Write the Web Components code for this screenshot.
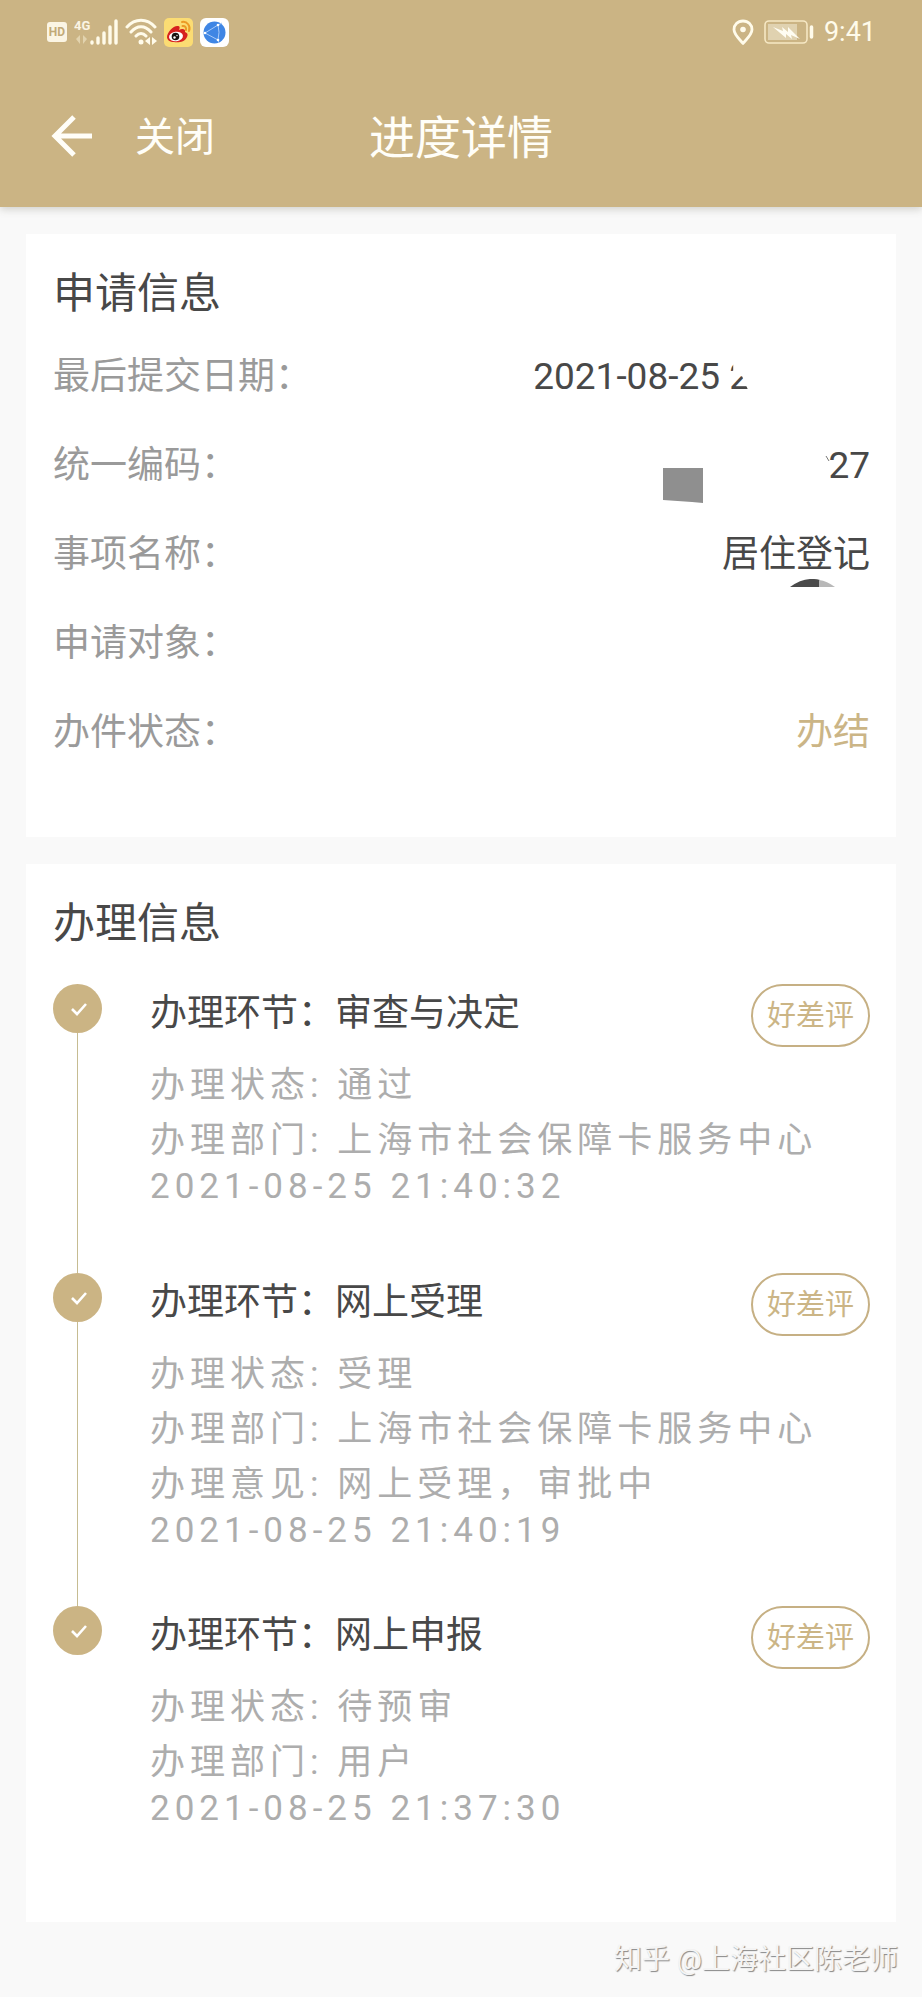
<!DOCTYPE html>
<html lang="zh-CN">
<head>
<meta charset="utf-8">
<meta name="viewport" content="width=device-width, initial-scale=1">
<title>进度详情</title>
<style>
  :root {
    --gold: #cbb484;
    --gold-text: #cbb586;
    --ink: #484848;
    --label: #9a9a9a;
    --muted: #adadad;
    --page: #f9f9f9;
  }
  body {
    margin: 0;
    background: var(--page);
    color: var(--ink);
    font-family: Roboto, "Noto Sans CJK SC", sans-serif;
  }
</style>
</head>
<body>
<progress-page></progress-page>

<script>
const define = (name, html) => {
  const template = document.createElement('template');
  template.innerHTML = html;
  customElements.define(name, class extends HTMLElement {
    constructor() {
      super();
      this.attachShadow({ mode: 'open' }).append(template.content.cloneNode(true));
    }
  });
};

define('status-bar', `
  <style>
    :host { display: flex; align-items: center; justify-content: space-between; height: 64px; padding: 0 46px 0 47px; color: #fffbea; }
    div { display: flex; align-items: center; gap: 7px; }
    .right { gap: 10px; }
    svg { display: block; height: 30px; }
    time { font-size: 27px; line-height: 30px; }
    text { font-family: Roboto, sans-serif; font-weight: 700; }
  </style>
  <div>
    <svg width="20" viewBox="0 0 20 30" role="img" aria-label="HD">
      <rect y="5" width="20" height="20" rx="3" fill="#fbf5e4"/>
      <text x="10" y="19" text-anchor="middle" font-size="12" fill="#c2aa78">HD</text>
    </svg>
    <svg width="44" viewBox="0 0 44 30" role="img" aria-label="4G">
      <text x="0" y="13" font-size="13" fill="#fbf5e4">4G</text>
      <path d="M6 18v9l-4-5zM9 18v9l4-5z" fill="#e2d3ae"/>
      <path d="M18 25v1M24 21v5M30 16v10M36 10v16M42 4v22" stroke="#fffbea" stroke-width="3.4" stroke-linecap="round"/>
    </svg>
    <svg width="32" viewBox="0 0 32 30" fill="none" stroke="#fffbea" stroke-width="3" stroke-linecap="round" aria-hidden="true">
      <path d="M2 10C10 1 22 1 30 10M6 15c6-7 14-7 20 0M11 19c3-3.500 7-3.500 10 0"/>
      <circle cx="16" cy="25" r="2.500" fill="#fffbea" stroke="none"/>
      <path d="M25 20v8l-5-4zM27 20v8l5-4z" fill="#fffbea" stroke="none"/>
    </svg>
    <svg width="29" viewBox="0 0 29 30" aria-hidden="true">
      <rect y="1" width="29" height="29" rx="5" fill="#fbdc73"/>
      <path d="M3 20c0-5 7-12 11-11 2 0 2 2 1 4 3-2 7-1 6 2 3 1 3 3 2 5-2 5-9 6-13 5-4 0-7-2-7-5z" fill="#d6211f"/>
      <ellipse cx="12" cy="19.500" rx="7" ry="4.800" fill="#fff" transform="rotate(-8 12 19.500)"/>
      <circle cx="11.500" cy="19.500" r="3.800" fill="#171310"/>
      <circle cx="10.500" cy="20.500" r="1.200" fill="#fff"/>
      <circle cx="13" cy="18.500" r="0.700" fill="#fff"/>
      <path d="M18 5c5-1 9 4 7 9M18.500 9c2.500-.5 4 1.500 3.500 4" fill="none" stroke="#eb9a25" stroke-width="2" stroke-linecap="round"/>
    </svg>
    <svg width="29" viewBox="0 0 29 30" aria-hidden="true">
      <rect y="1" width="29" height="29" rx="6" fill="#fff"/>
      <circle cx="14.500" cy="15.500" r="11" fill="#3f86e4"/>
      <path d="M5 16 18 8Q20 15 18 23L5 16M18 8l4-2M18 23l1 3" fill="none" stroke="#a9cbf8" stroke-width="1"/>
      <circle cx="18" cy="8" r="1.300" fill="#fff"/>
      <circle cx="18" cy="23" r="1.300" fill="#fff"/>
      <circle cx="5" cy="16" r="1.300" fill="#fff"/>
    </svg>
  </div>
  <div class="right">
    <svg width="22" viewBox="0 0 22 30" aria-hidden="true">
      <path d="M11 4c5.500 0 9 4 9 8.500 0 5-5 9-9 14-4-5-9-9-9-14C2 8 5.500 4 11 4z" fill="none" stroke="#fffbea" stroke-width="2.800" stroke-linejoin="round"/>
      <circle cx="11" cy="12.500" r="2.800" fill="#fffbea"/>
    </svg>
    <svg width="50" viewBox="0 0 50 30" aria-hidden="true">
      <rect x="1" y="4" width="42" height="22" rx="4" fill="none" stroke="#f6e8c4" stroke-width="1.600"/>
      <rect x="4" y="7" width="29" height="16" fill="#e0d2b0"/>
      <path d="m9 10 10 4-1-4 6 5 0-5 12 12-9-4 1 4-6-5 0 4z" fill="#fffdf2"/>
      <path d="M47.500 10v10" stroke="#fffbea" stroke-width="3.500" stroke-linecap="round"/>
    </svg>
    <time>9:41</time>
  </div>
`);

define('nav-bar', `
  <style>
    :host { display: grid; grid-template-columns: 1fr auto 1fr; align-items: center; height: 143px; color: #fffef8; }
    .left { display: flex; align-items: center; gap: 42px; padding-left: 51px; }
    button { border: 0; padding: 0; background: none; color: inherit; font: inherit; font-size: 40px; line-height: 60px; white-space: nowrap; cursor: pointer; }
    .close { padding-top: 4px; }
    svg { display: block; }
    h1 { margin: 0; padding-top: 4px; font-size: 46px; line-height: 68px; font-weight: 400; }
  </style>
  <div class="left">
    <button type="button" aria-label="返回">
      <svg width="42" height="44" viewBox="0 0 42 44" fill="none" stroke="currentColor" stroke-width="5" aria-hidden="true">
        <path d="M23 3 4 22l19 19M4 22h37"/>
      </svg>
    </button>
    <button type="button" class="close">关闭</button>
  </div>
  <h1><slot></slot></h1>
`);

define('info-card', `
  <style>
    :host { display: block; background: #fff; padding: 27px 26px 27px 27px; }
    h2 { margin: 0; font-size: 42px; line-height: 66px; font-weight: 400; }
  </style>
  <h2><slot name="heading"></slot></h2>
  <slot></slot>
`);

define('info-row', `
  <style>
    :host { display: flex; align-items: center; justify-content: space-between; height: 89px; font-size: 37px; line-height: 56px; }
    .label { color: var(--label); }
    .value { position: relative; }
  </style>
  <span class="label"><slot name="label"></slot></span>
  <span class="value"><slot></slot></span>
`);

define('application-info', `
  <style>
    :host { display: block; padding: 5px 0 33px; }
    .date { display: block; padding-right: 120px; }
    .cut { display: inline-block; clip-path: polygon(0 0, 4px 0, 4px 22px, 0 24px, 13px 28px, 20px 44px, 20px 56px, 0 56px); }
    .done { color: var(--gold-text); }
    svg { position: absolute; display: block; }
    .tick { right: 40px; top: 18px; }
    .block { right: 167px; top: 30px; }
    .cap { right: 35px; top: 52px; }
  </style>
  <info-row><span slot="label">最后提交日期：</span><span class="date">2021-08-25 <span class="cut">2</span></span></info-row>
  <info-row><span slot="label">统一编码：</span>27
    <svg class="tick" width="5" height="6" viewBox="0 0 5 6" aria-hidden="true"><path d="m1 0 3 5" stroke="#777" fill="none"/></svg>
    <svg class="block" width="40" height="35" viewBox="0 0 40 35" aria-hidden="true"><path d="M0 0h40v35l-11-1-29-2z" fill="#8f8f8f"/></svg>
  </info-row>
  <info-row><span slot="label">事项名称：</span>居住登记
    <svg class="cap" width="45" height="9" viewBox="0 0 45 9" aria-hidden="true"><path d="M0 8Q15-3 30 1v7z" fill="#4a4a4a"/><path d="M29 1q8 1 16 7H29z" fill="#b8b8b8"/></svg>
  </info-row>
  <info-row><span slot="label">申请对象：</span></info-row>
  <info-row><span slot="label">办件状态：</span><span class="done">办结</span></info-row>
`);

define('timeline-step', `
  <style>
    :host { display: grid; grid-template-columns: 49px 1fr; column-gap: 48px; min-height: 289px; }
    .rail { display: flex; flex-direction: column; align-items: center; }
    .dot { display: block; flex: none; }
    .line { flex: 1; width: 1px; background: #c6bc92; }
    :host([last]) .line { display: none; }
    .body { padding-bottom: 57px; }
    header { display: flex; justify-content: space-between; height: 60px; margin-bottom: 14px; }
    h3 { margin: 0; font-size: 37px; line-height: 60px; font-weight: 400; }
    button { box-sizing: border-box; width: 119px; height: 63px; padding: 0; border: 2px solid #c6b084; border-radius: 32px; background: none; color: var(--gold-text); font: inherit; font-size: 29px; line-height: 56px; cursor: pointer; }
    .details { color: var(--muted); font-size: 35px; line-height: 55px; letter-spacing: 5px; }
  </style>
  <div class="rail">
    <svg class="dot" width="49" height="49" viewBox="0 0 49 49" aria-hidden="true">
      <circle cx="24.500" cy="24.500" r="24.500" fill="#cbb484"/>
      <path d="m19 25 5 5 9-10" fill="none" stroke="#fff" stroke-width="2.600"/>
    </svg>
    <div class="line"></div>
  </div>
  <div class="body">
    <header><h3><slot name="title"></slot></h3><button type="button">好差评</button></header>
    <div class="details"><slot></slot></div>
  </div>
`);

define('step-list', `
  <style>
    :host { display: block; padding-top: 27px; }
    p { margin: 0; }
    time { display: block; line-height: 37px; }
  </style>
  <timeline-step>
    <span slot="title">办理环节：审查与决定</span>
    <p>办理状态: 通过</p>
    <p>办理部门: 上海市社会保障卡服务中心</p>
    <time>2021-08-25 21:40:32</time>
  </timeline-step>
  <timeline-step>
    <span slot="title">办理环节：网上受理</span>
    <p>办理状态: 受理</p>
    <p>办理部门: 上海市社会保障卡服务中心</p>
    <p>办理意见: 网上受理，审批中</p>
    <time>2021-08-25 21:40:19</time>
  </timeline-step>
  <timeline-step last>
    <span slot="title">办理环节：网上申报</span>
    <p>办理状态: 待预审</p>
    <p>办理部门: 用户</p>
    <time>2021-08-25 21:37:30</time>
  </timeline-step>
`);

define('progress-page', `
  <style>
    :host { display: block; }
    header { background: var(--gold); box-shadow: 0 2px 8px rgba(80, 80, 60, .25); }
    main { display: flex; flex-direction: column; gap: 27px; padding: 27px 26px 0; }
    footer { padding: 0 24px; text-align: right; font-size: 28px; line-height: 75px; color: #f4f4f4; text-shadow: 1px 1px 1px #888; }
  </style>
  <header>
    <status-bar></status-bar>
    <nav-bar>进度详情</nav-bar>
  </header>
  <main>
    <info-card><span slot="heading">申请信息</span><application-info></application-info></info-card>
    <info-card><span slot="heading">办理信息</span><step-list></step-list></info-card>
  </main>
  <footer>知乎 @上海社区陈老师</footer>
`);
</script>
</body>
</html>
